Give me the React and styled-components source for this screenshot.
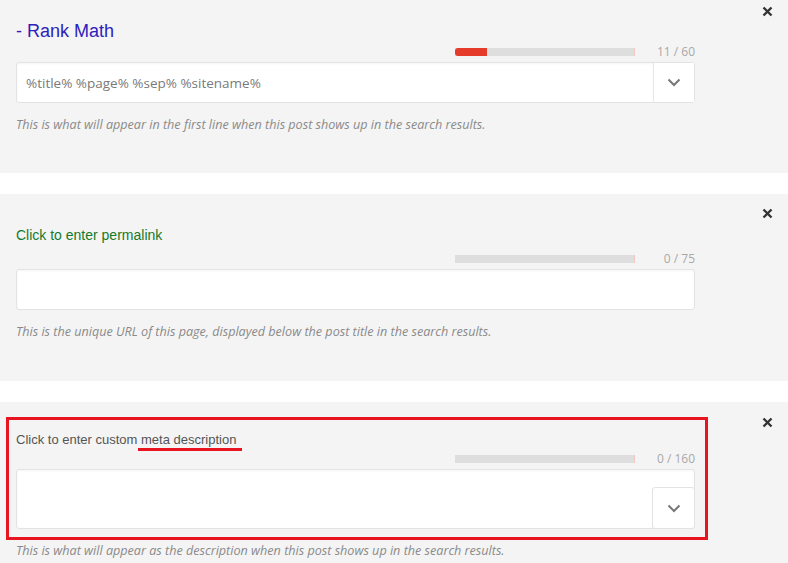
import React from "react";
import styled, { createGlobalStyle } from "styled-components";

const Global = createGlobalStyle`
  html, body { margin: 0; padding: 0; background: #ffffff; }
  body { font-family: "Liberation Sans", Arial, sans-serif; }
`;

const Page = styled.div`
  width: 788px;
  height: 563px;
  overflow: hidden;
  display: flex;
  flex-direction: column;
  gap: 21px;
`;

const Panel = styled.section`
  position: relative;
  background: #f4f4f4;
  height: ${(p) => p.$h}px;
  padding: ${(p) => p.$pt}px 0 0 16px;
  box-sizing: border-box;
  flex-shrink: 0;
`;

const Content = styled.div`
  width: 679px;
  display: flex;
  flex-direction: column;
`;

const Close = styled.button`
  position: absolute;
  top: ${(p) => p.$top}px;
  left: 762px;
  width: 11px;
  height: 11px;
  padding: 0;
  border: 0;
  background: transparent;
  display: flex;
  align-items: center;
  justify-content: center;
  cursor: pointer;
`;

const Title = styled.div`
  font-family: "Liberation Sans", Arial, sans-serif;
  font-size: ${(p) => p.$size}px;
  line-height: ${(p) => p.$lh}px;
  color: ${(p) => p.$color};
  white-space: nowrap;
`;

const Marked = styled.span`
  position: relative;
  &::after {
    content: "";
    position: absolute;
    left: -3px;
    right: -6px;
    bottom: -4px;
    height: 3px;
    background: #e8141f;
  }
`;

const MeterRow = styled.div`
  display: flex;
  align-items: center;
  justify-content: flex-end;
  height: 12px;
  margin-top: ${(p) => p.$mt}px;
`;

const Bar = styled.div`
  width: 180px;
  height: 8px;
  background: #dedede;
  border-right: 1px solid #f0c8c4;
  box-sizing: border-box;
  display: flex;
`;

const Fill = styled.div`
  height: 100%;
  background: #e53b2b;
  border-radius: 3px 0 0 3px;
`;

const Count = styled.div`
  width: 60px;
  text-align: right;
  font-family: "Open Sans", sans-serif;
  font-size: 12px;
  line-height: 12px;
  color: #a8a8a8;
`;

const Field = styled.div`
  margin-top: 4px;
  height: ${(p) => p.$h}px;
  background: #fff;
  border: 1px solid #e3e3e3;
  border-radius: 3px;
  box-shadow: inset 0 1px 3px rgba(0, 0, 0, 0.04);
  box-sizing: border-box;
  display: flex;
  align-items: ${(p) => (p.$bottom ? "flex-end" : "stretch")};
`;

const FieldText = styled.div`
  flex: 1;
  display: flex;
  align-items: center;
  padding-left: 9px;
  font-family: "Open Sans", sans-serif;
  font-size: 13.5px;
  color: #7a7a7a;
`;

const Toggle = styled.button`
  width: 41px;
  height: ${(p) => (p.$boxed ? 42 : 39)}px;
  margin: ${(p) => (p.$boxed ? "0 -1px -1px 0" : "0")};
  padding: 0;
  background: #fff;
  border: 0;
  border-left: 1px solid #e6e6e6;
  ${(p) =>
    p.$boxed &&
    `border: 1px solid #e3e3e3; border-radius: 3px; width: 43px;`}
  box-sizing: border-box;
  display: flex;
  align-items: center;
  justify-content: center;
  cursor: pointer;
`;

const Help = styled.p`
  margin: ${(p) => p.$mt}px 0 0;
  font-family: "Open Sans", sans-serif;
  font-style: italic;
  font-size: 12.6px;
  line-height: 16px;
  color: #8a8a8a;
  white-space: nowrap;
`;

const Highlight = styled.div`
  margin: 15px 0 0 -10px;
  width: 702px;
  height: 123px;
  border: 3px solid #e8141f;
  box-sizing: border-box;
  padding: 11px 10px 0 7px;
  display: flex;
  flex-direction: column;
`;

const XIcon = () => (
  <svg width="11" height="11" viewBox="0 0 11 11">
    <path d="M1.5 1.5 L9.5 9.5 M9.5 1.5 L1.5 9.5" stroke="#333" strokeWidth="2.4" strokeLinecap="butt" />
  </svg>
);

const Chevron = () => (
  <svg width="14" height="9" viewBox="0 0 14 9">
    <path d="M1.5 1.5 L7 7 L12.5 1.5" fill="none" stroke="#777" strokeWidth="2" />
  </svg>
);

const Meter = ({ value, max, mt }) => (
  <MeterRow $mt={mt}>
    <Bar>
      {value > 0 && <Fill style={{ width: `${Math.round((value / max) * 180 * 0.97)}px` }} />}
    </Bar>
    <Count>
      {value} / {max}
    </Count>
  </MeterRow>
);

export default function App() {
  return (
    <>
      <Global />
      <Page>
        <Panel $h={173} $pt={20}>
          <Close $top={6} aria-label="close">
            <XIcon />
          </Close>
          <Content>
            <Title $size={18} $lh={22} $color="#2d21bd">- Rank Math</Title>
            <Meter value={11} max={60} mt={4} />
            <Field $h={41}>
              <FieldText>%title% %page% %sep% %sitename%</FieldText>
              <Toggle aria-label="toggle">
                <Chevron />
              </Toggle>
            </Field>
            <Help $mt={14}>
              This is what will appear in the first line when this post shows up in the search results.
            </Help>
          </Content>
        </Panel>

        <Panel $h={187} $pt={32}>
          <Close $top={14} aria-label="close">
            <XIcon />
          </Close>
          <Content>
            <Title $size={14} $lh={18} $color="#157a2a">Click to enter permalink</Title>
            <Meter value={0} max={75} mt={9} />
            <Field $h={41} />
            <Help $mt={14}>
              This is the unique URL of this page, displayed below the post title in the search results.
            </Help>
          </Content>
        </Panel>

        <Panel $h={162} $pt={0}>
          <Close $top={15} aria-label="close">
            <XIcon />
          </Close>
          <Content>
            <Highlight>
              <Title $size={13} $lh={18} $color="#545454">
                Click to enter custom <Marked>meta description</Marked>
              </Title>
              <Meter value={0} max={160} mt={4} />
              <Field $h={60} $bottom>
                <FieldText />
                <Toggle $boxed aria-label="toggle">
                  <Chevron />
                </Toggle>
              </Field>
            </Highlight>
            <Help $mt={3}>
              This is what will appear as the description when this post shows up in the search results.
            </Help>
          </Content>
        </Panel>
      </Page>
    </>
  );
}
